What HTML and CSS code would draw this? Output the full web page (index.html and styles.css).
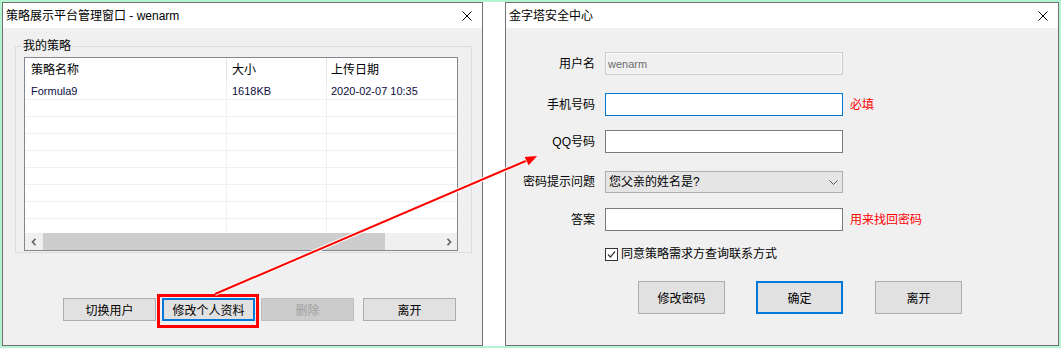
FILE: index.html
```html
<!DOCTYPE html>
<html lang="zh-CN">
<head>
  <meta charset="UTF-8">
  <meta name="viewport" content="width=device-width, initial-scale=1.0">
  <title>策略展示平台管理窗口</title>
  <link rel="stylesheet" href="styles.css">
</head>
<body>
  <div class="screen">
    <!-- 管理窗口 -->
    <div class="window win-manage">
      <div class="titlebar">
        <span class="title">策略展示平台管理窗口 - wenarm</span>
        <svg class="close" viewBox="0 0 10 10"><path d="M0.5 0.5 L9.5 9.5 M9.5 0.5 L0.5 9.5" stroke="#000" stroke-width="1"/></svg>
      </div>
      <div class="client">
        <fieldset class="group">
          <legend>我的策略</legend>
          <div class="listview">
            <div class="lv-head">
              <div class="col c1">策略名称</div>
              <div class="col c2">大小</div>
              <div class="col c3">上传日期</div>
            </div>
            <div class="lv-body">
              <div class="lv-row">
                <div class="col c1">Formula9</div>
                <div class="col c2">1618KB</div>
                <div class="col c3">2020-02-07 10:35</div>
              </div>
              <div class="lv-row"><div class="col c1"></div><div class="col c2"></div><div class="col c3"></div></div>
              <div class="lv-row"><div class="col c1"></div><div class="col c2"></div><div class="col c3"></div></div>
              <div class="lv-row"><div class="col c1"></div><div class="col c2"></div><div class="col c3"></div></div>
              <div class="lv-row"><div class="col c1"></div><div class="col c2"></div><div class="col c3"></div></div>
              <div class="lv-row"><div class="col c1"></div><div class="col c2"></div><div class="col c3"></div></div>
              <div class="lv-row"><div class="col c1"></div><div class="col c2"></div><div class="col c3"></div></div>
              <div class="lv-row"><div class="col c1"></div><div class="col c2"></div><div class="col c3"></div></div>
              <div class="lv-row"><div class="col c1"></div><div class="col c2"></div><div class="col c3"></div></div>
            </div>
            <div class="hscroll">
              <span class="sb-btn"><svg viewBox="0 0 6 8"><path d="M4.5 0.8 L1.5 4 L4.5 7.2" fill="none" stroke="#606060" stroke-width="1.6"/></svg></span>
              <span class="sb-thumb"></span>
              <span class="sb-track"></span>
              <span class="sb-btn"><svg viewBox="0 0 6 8"><path d="M1.5 0.8 L4.5 4 L1.5 7.2" fill="none" stroke="#606060" stroke-width="1.6"/></svg></span>
            </div>
          </div>
        </fieldset>

        <div class="actions">
          <button class="btn">切换用户</button>
          <button class="btn btn-default">修改个人资料</button>
          <button class="btn" disabled>删除</button>
          <button class="btn btn-last">离开</button>
        </div>
      </div>
    </div>

    <!-- 安全中心 -->
    <div class="window win-security">
      <div class="titlebar">
        <span class="title">金字塔安全中心</span>
        <svg class="close" viewBox="0 0 10 10"><path d="M0.5 0.5 L9.5 9.5 M9.5 0.5 L0.5 9.5" stroke="#000" stroke-width="1"/></svg>
      </div>
      <div class="client form">
        <div class="row row-user">
          <label class="label">用户名</label>
          <input class="field" type="text" value="wenarm" disabled>
        </div>
        <div class="row row-phone">
          <label class="label">手机号码</label>
          <input class="field focused" type="text">
          <span class="hint">必填</span>
        </div>
        <div class="row row-qq">
          <label class="label">QQ号码</label>
          <input class="field" type="text">
        </div>
        <div class="row row-question">
          <label class="label">密码提示问题</label>
          <div class="combo">
            <span>您父亲的姓名是?</span>
            <svg class="chevron" viewBox="0 0 9 5"><path d="M0.5 0.5 L4.5 4.5 L8.5 0.5" fill="none" stroke="#555" stroke-width="1"/></svg>
          </div>
        </div>
        <div class="row row-answer">
          <label class="label">答案</label>
          <input class="field" type="text">
          <span class="hint">用来找回密码</span>
        </div>
        <div class="check-row">
          <span class="checkbox"><svg viewBox="0 0 11 11"><path d="M2 5.5 L4.5 8 L9 2.5" fill="none" stroke="#333" stroke-width="1.2"/></svg></span>
          <span>同意策略需求方查询联系方式</span>
        </div>
        <div class="form-actions">
          <button class="btn btn-big">修改密码</button>
          <button class="btn btn-big btn-default btn-ok">确定</button>
          <button class="btn btn-big btn-leave">离开</button>
        </div>
      </div>
    </div>
  </div>

  <!-- 标注：红框和箭头 -->
  <svg class="annot" width="1061" height="348" viewBox="0 0 1061 348">
    <rect x="158.5" y="295.5" width="99" height="31" fill="none" stroke="#ff0000" stroke-width="3"/>
    <line x1="215" y1="294" x2="528" y2="160" stroke="#fff" stroke-width="4"/>
    <line x1="215" y1="294" x2="528" y2="160" stroke="#ff0000" stroke-width="2"/>
    <polygon points="538,155.5 524,156.5 528.5,166" fill="#ff0000" stroke="#fff" stroke-width="0.8"/>
  </svg>
</body>
</html>
```

FILE: styles.css
```css
body {
  margin: 0;
  width: 1061px;
  height: 348px;
  overflow: hidden;
  position: relative;
  background-color: #b4f2d2;
  font-family: "Liberation Sans", "Noto Sans CJK SC", sans-serif;
  font-size: 12px;
  color: #000;
}

.screen {
  display: flex;
  justify-content: space-between;
  margin: 2px;
  height: 344px;
  background-color: #fff;
}

.window {
  display: flex;
  flex-direction: column;
  box-sizing: border-box;
  height: 100%;
  border: 1px solid #717171;
  background-color: #f0f0f0;
}

.win-manage {
  width: 481px;
}

.win-security {
  width: 554px;
}

.titlebar {
  display: flex;
  align-items: center;
  justify-content: space-between;
  height: 25px;
  padding: 0 10px 0 3px;
  background-color: #fff;
  line-height: 16px;
}

.close {
  width: 10px;
  height: 10px;
}

.client {
  flex: 1;
}

/* group box */
.group {
  margin: 11px 10px 0 12px;
  padding: 4px 13px 1px 8px;
  border: 1px solid #dcdcdc;
  min-width: 0;
}

.group legend {
  margin-left: -3px;
  padding: 0 2px;
  line-height: 14px;
}

/* list view */
.listview {
  display: flex;
  flex-direction: column;
  box-sizing: border-box;
  height: 194px;
  border: 1px solid #828790;
  background-color: #fff;
  overflow: hidden;
}

.lv-head {
  display: flex;
  height: 25px;
  flex-shrink: 0;
  line-height: 25px;
}

.lv-head .col {
  border-right: 1px solid #e5e5e5;
}

.lv-head .c3 {
  border-right: none;
}

.col {
  box-sizing: border-box;
  white-space: nowrap;
  overflow: hidden;
}

.c1 {
  width: 202px;
  padding-left: 6px;
}

.c2 {
  width: 100px;
  padding-left: 5px;
}

.c3 {
  flex: 1;
  padding-left: 4px;
}

.lv-body {
  flex: 1;
  overflow: hidden;
}

.lv-row {
  display: flex;
  box-sizing: border-box;
  height: 17px;
  border-bottom: 1px solid #f0f0f0;
  font-size: 11px;
  line-height: 17px;
  color: #0c0c40;
}

.lv-row .c1,
.lv-row .c2 {
  border-right: 1px solid #f0f0f0;
}

.hscroll {
  display: flex;
  height: 17px;
  flex-shrink: 0;
  background-color: #f0f0f0;
}

.sb-btn {
  display: flex;
  align-items: center;
  justify-content: center;
  width: 17px;
}

.sb-btn svg {
  width: 6px;
  height: 8px;
}

.sb-thumb {
  width: 342px;
  margin-left: 1px;
  background-color: #cdcdcd;
}

.sb-track {
  flex: 1;
}

/* buttons */
.btn {
  box-sizing: border-box;
  width: 93px;
  height: 23px;
  padding: 0;
  border: 1px solid #adadad;
  background-color: #e1e1e1;
  font-family: inherit;
  font-size: 12px;
  color: #000;
}

.btn-default {
  border: 2px solid #0078d7;
}

.btn:disabled {
  border-color: #bfbfbf;
  background-color: #cccccc;
  color: #a0a0a0;
}

.actions {
  display: flex;
  gap: 6px;
  margin-top: 45px;
  padding-left: 60px;
}

.btn-last {
  margin-left: 3px;
}

/* security form */
.form {
  padding-top: 24px;
}

.row {
  display: flex;
  align-items: center;
  height: 23px;
}

.row-phone {
  margin-top: 18px;
}

.row-qq {
  margin-top: 14px;
}

.row-question {
  margin-top: 18px;
  height: 22px;
}

.row-answer {
  margin-top: 15px;
}

.label {
  width: 89px;
  margin-right: 10px;
  text-align: right;
  line-height: 16px;
}

.field {
  box-sizing: border-box;
  width: 238px;
  height: 23px;
  margin: 0;
  padding: 0 2px;
  border: 1px solid #7a7a7a;
  background-color: #fff;
  font-family: inherit;
  font-size: 11px;
  color: #000;
  outline: none;
}

.field:disabled {
  border-color: #cccccc;
  background-color: #f0f0f0;
  box-shadow: inset 0 0 0 1px #fafafa;
  color: #6d6d6d;
}

.field.focused {
  border-color: #0078d7;
}

.hint {
  margin-left: 7px;
  color: #ff0000;
  line-height: 16px;
}

.combo {
  display: flex;
  align-items: center;
  justify-content: space-between;
  box-sizing: border-box;
  width: 238px;
  height: 22px;
  padding: 0 4px 0 3px;
  border: 1px solid #adadad;
  background-color: #e5e5e5;
  line-height: 16px;
}

.chevron {
  width: 9px;
  height: 5px;
}

.check-row {
  display: flex;
  align-items: center;
  gap: 3px;
  height: 14px;
  margin-top: 16px;
  margin-left: 99px;
  line-height: 16px;
}

.checkbox {
  display: flex;
  align-items: center;
  justify-content: center;
  box-sizing: border-box;
  width: 13px;
  height: 13px;
  border: 1px solid #333;
  background-color: #fff;
}

.checkbox svg {
  width: 11px;
  height: 11px;
}

.form-actions {
  display: flex;
  margin-top: 20px;
  margin-left: 132px;
}

.btn-big {
  width: 87px;
  height: 33px;
}

.btn-ok {
  margin-left: 31px;
}

.btn-leave {
  margin-left: 32px;
}

/* annotation overlay */
.annot {
  position: absolute;
  top: 0;
  left: 0;
  pointer-events: none;
}
```
